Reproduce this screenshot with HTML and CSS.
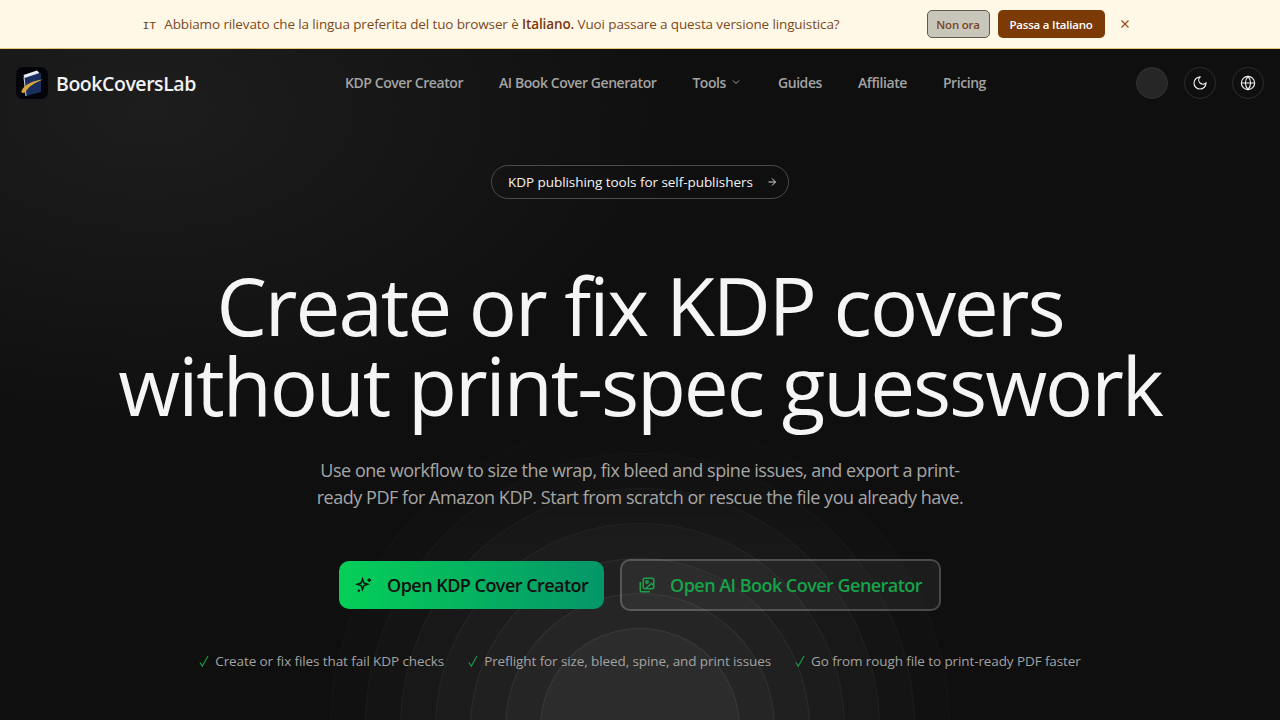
FILE: index.html
```html
<!DOCTYPE html>
<html lang="en">
<head>
<meta charset="utf-8">
<title>BookCoversLab</title>
<link rel="stylesheet" href="styles.css">
</head>
<body>
<div class="banner">
  <span class="lang-code">IT</span>
  <p class="banner-text">Abbiamo rilevato che la lingua preferita del tuo browser è <strong>Italiano.</strong> Vuoi passare a questa versione linguistica?</p>
  <div class="banner-actions">
    <button class="btn-later">Non ora</button>
    <button class="btn-switch">Passa a Italiano</button>
    <button class="btn-close" aria-label="Chiudi"><svg viewBox="0 0 24 24" class="icon-x"><path d="M6 6l12 12M18 6L6 18"/></svg></button>
  </div>
</div>
<div class="page">
  <div class="spotlight"></div>
  <div class="ripple">
    <i class="ring r7"></i><i class="ring r6"></i><i class="ring r5"></i><i class="ring r4"></i><i class="ring r3"></i><i class="ring r2"></i><i class="ring r1"></i>
  </div>
  <header class="nav">
    <a class="brand">
      <svg class="logo" viewBox="0 0 32 32">
        <rect width="32" height="32" rx="7" fill="#03050a"/>
        <path d="M8 9 L25 6 V25 L10 29 Z" fill="#1b2f5e"/>
        <path d="M7.500 8 L21 3.500 L23.500 6 L8.500 11 Z" fill="#e8edf5"/>
        <path d="M8 10 L10 29" stroke="#cfd8e6" stroke-width="1" fill="none"/>
        <path d="M5.500 24 C8 18 16 13.500 27 12.500 C19 15.500 13 19 9 25.500 C7 26.500 5 26 5.500 24Z" fill="#d6a63c"/>
      </svg>
      <span class="brand-name">BookCoversLab</span>
    </a>
    <nav class="links">
      <a>KDP Cover Creator</a>
      <a>AI Book Cover Generator</a>
      <a class="has-caret">Tools <svg viewBox="0 0 24 24" class="caret"><path d="M6 9l6 6 6-6"/></svg></a>
      <a>Guides</a>
      <a>Affiliate</a>
      <a>Pricing</a>
    </nav>
    <div class="nav-actions">
      <span class="circle filled"></span>
      <span class="circle"><svg viewBox="0 0 24 24" class="icon"><path d="M12 3a6 6 0 0 0 9 9 9 9 0 1 1-9-9Z"/></svg></span>
      <span class="circle"><svg viewBox="0 0 24 24" class="icon"><circle cx="12" cy="12" r="10"/><path d="M2 12h20M12 2a15 15 0 0 1 0 20 15 15 0 0 1 0-20Z"/></svg></span>
    </div>
  </header>
  <main class="hero">
    <a class="pill">KDP publishing tools for self-publishers <svg viewBox="0 0 24 24" class="pill-arrow"><path d="M5 12h14M12 5l7 7-7 7"/></svg></a>
    <h1>Create or fix KDP covers<br>without print-spec guesswork</h1>
    <p class="lead">Use one workflow to size the wrap, fix bleed and spine issues, and export a print-<br>ready PDF for Amazon KDP. Start from scratch or rescue the file you already have.</p>
    <div class="cta">
      <a class="btn-primary"><svg viewBox="0 0 24 24" class="btn-icon"><path d="M10 4l1.800 5.200L17 11l-5.200 1.800L10 18l-1.800-5.200L3 11l5.200-1.800Z"/><path d="M19 3v5M16.500 5.500h5M5 18v3M3.500 19.500h3"/></svg>Open KDP Cover Creator</a>
      <a class="btn-secondary"><svg viewBox="0 0 24 24" class="btn-icon"><rect x="7" y="3" width="14" height="14" rx="2"/><circle cx="12" cy="8" r="1.600"/><path d="M21 13l-3-3-8 7M3 8v11a2 2 0 0 0 2 2h11"/></svg>Open AI Book Cover Generator</a>
    </div>
    <ul class="checks">
      <li><svg viewBox="0 0 10 12" class="tick"><path d="M1 7.500L3.300 11.200L9 1"/></svg>Create or fix files that fail KDP checks</li>
      <li><svg viewBox="0 0 10 12" class="tick"><path d="M1 7.500L3.300 11.200L9 1"/></svg>Preflight for size, bleed, spine, and print issues</li>
      <li><svg viewBox="0 0 10 12" class="tick"><path d="M1 7.500L3.300 11.200L9 1"/></svg>Go from rough file to print-ready PDF faster</li>
    </ul>
  </main>
</div>
</body>
</html>
```
FILE: styles.css
```css
* { box-sizing: border-box; }
html, body { margin: 0; height: 100%; overflow: hidden; }
body { font-family: "Open Sans", "Noto Sans", sans-serif; background: #0f0f0f; color: #fff; }

.banner {
  height: 49px; display: flex; align-items: center; justify-content: center;
  background: #fff8e7; border-bottom: 1px solid #e6c776; color: #6b3f17; padding-right: 3px;
}
.lang-code { font-family: "Liberation Mono", monospace; font-size: 11.500px; margin-right: 8px; padding-top: 3px; color: #6b3f17; }
.banner-text { margin: 0; font-size: 13.5px; letter-spacing: -0.12px; color: #7b4a1e; }
.banner-text strong { font-weight: 600; color: #78350f; }
.banner-actions { display: flex; align-items: center; margin-left: 87px; }
.btn-later, .btn-switch { height: 28px; border-radius: 5px; font: 600 11.5px "Open Sans", sans-serif; letter-spacing: -0.2px; }
.btn-later { width: 63px; background: #c8c5bb; border: 1px solid #5e5a50; color: #78451d; }
.btn-switch { width: 107px; margin-left: 8px; background: #7c3a06; border: 0; color: #fff; }
.btn-close { margin-left: 10px; width: 20px; height: 20px; padding: 3px; background: none; border: 0; }
.icon-x { display: block; fill: none; stroke: #9a4a12; stroke-width: 2; }

.page { position: relative; height: 671px; overflow: hidden; background: #0f0f0f; }
.spotlight { position: absolute; left: -400px; top: -270px; width: 1100px; height: 660px; background: radial-gradient(closest-side, rgba(255,255,255,.06), rgba(255,255,255,0)); }
.ripple { position: absolute; inset: 0; -webkit-mask-image: linear-gradient(to bottom, transparent 280px, #fff 500px); mask-image: linear-gradient(to bottom, transparent 280px, #fff 500px); }
.ring { position: absolute; left: 50%; top: 679px; border-radius: 50%; transform: translate(-50%, -50%); border-style: solid; border-width: 1px; }
.r1 { width: 200px; height: 200px; background: rgba(255,255,255,.03); border-color: rgba(255,255,255,.07); }
.r2 { width: 270px; height: 270px; background: rgba(255,255,255,.025); border-color: rgba(255,255,255,.06); }
.r3 { width: 340px; height: 340px; background: rgba(255,255,255,.025); border-color: rgba(255,255,255,.05); }
.r4 { width: 410px; height: 410px; background: rgba(255,255,255,.02); border-color: rgba(255,255,255,.045); }
.r5 { width: 480px; height: 480px; background: rgba(255,255,255,.02); border-color: rgba(255,255,255,.04); }
.r6 { width: 550px; height: 550px; background: rgba(255,255,255,.015); border-color: rgba(255,255,255,.03); }
.r7 { width: 620px; height: 620px; background: rgba(255,255,255,.012); border-color: rgba(255,255,255,.025); }

.nav { position: relative; height: 68px; display: flex; align-items: center; padding: 0 16px; }
.brand { display: flex; align-items: center; gap: 8px; }
.logo { width: 32px; height: 32px; display: block; }
.brand-name { font-size: 19.500px; font-weight: 600; letter-spacing: -0.45px; color: #f2f2f2; }
.links { position: absolute; left: 345px; top: 0; height: 66px; display: flex; align-items: center; gap: 36px; }
.links a { font-size: 14px; font-weight: 600; letter-spacing: -0.43px; color: #a3a3a3; display: flex; align-items: center; }
.caret { width: 12px; height: 12px; margin-left: 4px; fill: none; stroke: #a3a3a3; stroke-width: 2; }
.nav-actions { margin-left: auto; display: flex; gap: 16px; }
.circle { width: 32px; height: 32px; border-radius: 50%; border: 1px solid #2c2c2c; display: flex; align-items: center; justify-content: center; }
.circle.filled { background: #262626; border-color: #333; }
.icon { width: 16px; height: 16px; fill: none; stroke: #f2f2f2; stroke-width: 1.700; }

.hero { position: relative; display: flex; flex-direction: column; align-items: center; }
.pill { margin-top: 48px; height: 34px; width: 298px; padding-left: 16px; border: 1px solid #4a4a4a; border-radius: 17px; display: flex; align-items: center; gap: 13px; font-size: 13.5px; letter-spacing: -0.05px; color: #f4f4f4; }
.pill-arrow { width: 12px; height: 12px; fill: none; stroke: #d4d4d4; stroke-width: 2; }
h1 { margin: 66px 0 0; font-size: 80px; line-height: 80px; font-weight: 400; letter-spacing: -2.05px; text-align: center; color: #f5f5f5; }
.lead { margin: 32px 0 0; font-size: 18px; line-height: 27px; text-align: center; color: #a6a6a6; letter-spacing: -0.47px; font-weight: 400; }
.cta { margin-top: 48px; display: flex; align-items: center; gap: 16px; }
.btn-primary, .btn-secondary { display: flex; align-items: center; font-size: 18px; font-weight: 600; letter-spacing: -0.53px; }
.btn-primary { width: 265px; height: 48px; border-radius: 10px; padding-left: 16px; gap: 14px; background: linear-gradient(90deg, #05cf58, #059669); color: #0f0f0f; }
.btn-secondary { width: 321px; height: 52px; border-radius: 10px; padding-left: 16px; gap: 14px; border: 2px solid rgba(255,255,255,.2); background: rgba(255,255,255,.055); color: #16a34a; }
.btn-icon { width: 18px; height: 18px; flex: none; fill: none; stroke: currentColor; stroke-width: 2; }
.checks { list-style: none; margin: 41px 0 0; padding: 0; display: flex; gap: 24px; font-size: 13.5px; color: #a3a3a3; letter-spacing: -0.1px; }
.checks li { display: flex; align-items: center; }
.tick { width: 10px; height: 12px; margin-right: 6px; fill: none; stroke: #16a34a; stroke-width: 1.100; }
```
